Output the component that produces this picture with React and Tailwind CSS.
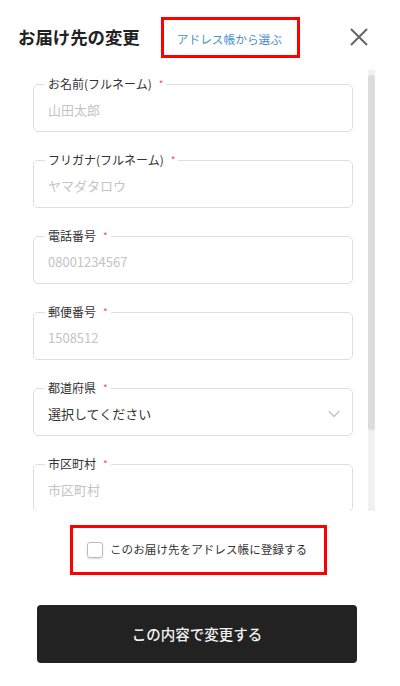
import { ChevronDown } from 'lucide-react';

const fields = [
  { label: 'お名前(フルネーム)', placeholder: '山田太郎' },
  { label: 'フリガナ(フルネーム)', placeholder: 'ヤマダタロウ' },
  { label: '電話番号', placeholder: '08001234567' },
  { label: '郵便番号', placeholder: '1508512' },
  { label: '都道府県', value: '選択してください', select: true },
  { label: '市区町村', placeholder: '市区町村' },
];

function Field({ label, placeholder, value, select }) {
  return (
    <fieldset className="mb-[22px] rounded-[5px] border border-[#dedede]">
      <legend className="ml-[11px] flex items-center px-[3px] text-[12px] leading-[12px] text-[#333]">
        {label}
        <span className="ml-[7px] text-[10px] leading-[10px] text-[#ec4f86]">*</span>
      </legend>
      <div className="flex h-[41px] items-center pl-[14px] pr-[8px] pb-[1px] text-[13px]">
        {select ? (
          <>
            <span className="text-[#333]">{value}</span>
            <ChevronDown className="ml-auto h-[20px] w-[20px] text-[#c4c4c4]" strokeWidth={1.5} />
          </>
        ) : (
          <span className="text-[#c4c4c4]">{placeholder}</span>
        )}
      </div>
    </fieldset>
  );
}

export default function App() {
  return (
    <div
      className="h-[686px] w-[400px] overflow-hidden bg-white"
      style={{ fontFamily: '"Noto Sans CJK JP", "Noto Sans", sans-serif' }}
    >
      <div className="flex items-start pl-[18px] pt-[17px]">
        <h1 className="mt-[8px] text-[17.4px] font-bold leading-[24px] text-[#222]">お届け先の変更</h1>
        <div className="ml-[21px] flex h-[41px] w-[139px] items-center border-[3px] border-[#ff0000] pl-[13px] pt-[2px] text-[11.7px] text-[#4a8fd0]">
          アドレス帳から選ぶ
        </div>
        <button className="ml-auto mr-[31px] mt-[10px] text-[#666]">
          <svg width="20" height="20" viewBox="0 0 20 20" fill="none" stroke="currentColor" strokeWidth="2">
            <path d="M2 2 L18 18 M18 2 L2 18" />
          </svg>
        </button>
      </div>

      <div className="mt-[12px] flex h-[441px] overflow-hidden">
        <div className="w-[353px] pl-[33px] pt-[8px]">
          {fields.map((f) => (
            <Field key={f.label} {...f} />
          ))}
        </div>
        <div className="ml-[15px] w-[7px] bg-[#f1f1f1] pt-[5px]">
          <div className="h-[355px] rounded-[3px] bg-[#dcdcdc]" />
        </div>
      </div>

      <div className="ml-[70px] mt-[14px] flex h-[50px] w-[257px] items-center border-[3px] border-[#ff0000] pl-[14px]">
        <span className="h-[16px] w-[16px] rounded-[3px] border border-[#bdbdbd] shadow-[0_1px_2px_rgba(0,0,0,0.15)]" />
        <span className="ml-[7px] text-[11.6px] text-[#333]">このお届け先をアドレス帳に登録する</span>
      </div>

      <button className="ml-[37px] mt-[30px] flex h-[58px] w-[320px] items-center justify-center rounded-[4px] bg-[#222] text-[14.5px] font-medium text-[#f2f2f2]">
        この内容で変更する
      </button>
    </div>
  );
}
